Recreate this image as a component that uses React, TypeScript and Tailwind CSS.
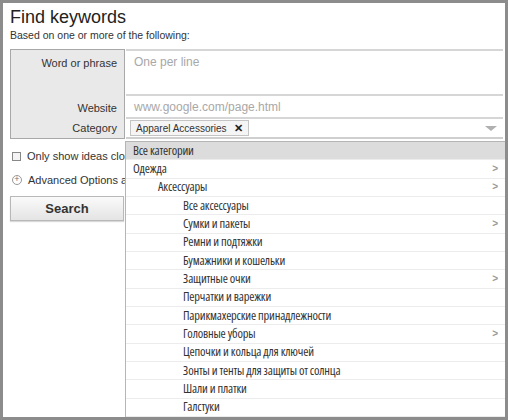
import React from 'react';

interface Category {
  name: string;
  level: number;
  more?: boolean;
}

const categories: Category[] = [
  { name: 'Все категории', level: 0 },
  { name: 'Одежда', level: 0, more: true },
  { name: 'Аксессуары', level: 1, more: true },
  { name: 'Все аксессуары', level: 2 },
  { name: 'Сумки и пакеты', level: 2, more: true },
  { name: 'Ремни и подтяжки', level: 2 },
  { name: 'Бумажники и кошельки', level: 2 },
  { name: 'Защитные очки', level: 2, more: true },
  { name: 'Перчатки и варежки', level: 2 },
  { name: 'Парикмахерские принадлежности', level: 2 },
  { name: 'Головные уборы', level: 2, more: true },
  { name: 'Цепочки и кольца для ключей', level: 2 },
  { name: 'Зонты и тенты для защиты от солнца', level: 2 },
  { name: 'Шали и платки', level: 2 },
  { name: 'Галстуки', level: 2 },
];

const indent = ['pl-[7px]', 'pl-[32px]', 'pl-[57px]'];

function CategoryMenu() {
  return (
    <div className="absolute left-[122px] top-[138px] right-0 bottom-0 flex flex-col border-l border-t border-[#b5b5b5] bg-white">
      {categories.map((c, i) => (
        <div
          key={c.name}
          className={`flex min-h-0 flex-1 items-center justify-between border-b border-[#ececec] pr-[7px] leading-[14px] ${indent[c.level]} ${
            i === 0 ? 'bg-[#dcdcdc]' : ''
          }`}
        >
          <span className="font-['Open_Sans',sans-serif] text-[12.5px] tracking-[-0.2px] text-[#333] [font-stretch:75%]">
            {c.name}
          </span>
          {c.more && <span className="text-[10px] font-bold text-[#999]">&gt;</span>}
        </div>
      ))}
    </div>
  );
}

export default function App() {
  return (
    <div className="relative h-[420px] w-[508px] overflow-hidden border-[3px] border-[#8c8c8c] bg-white font-['Liberation_Sans',Arial,sans-serif] text-[#333]">
      <div className="pl-[7px] pr-[2px] pt-[4px]">
        <h1 className="text-[18px] leading-[20px] text-[#222]">Find keywords</h1>
        <p className="mt-[2px] text-[10.5px] leading-[12px] text-[#333]">Based on one or more of the following:</p>

        <div className="mt-[8px] flex">
          <div className="flex w-[115px] shrink-0 flex-col border border-[#a8a8a8] bg-[#e9e9e9] pr-[7px] text-right text-[11px] text-[#333]">
            <div className="h-[45px] pt-[5px]">Word or phrase</div>
            <div className="flex h-[23px] items-center justify-end pt-[3px]">Website</div>
            <div className="flex h-[20px] items-center justify-end">Category</div>
          </div>
          <div className="ml-[1px] flex flex-1 flex-col border-b-2 border-[#cfcfcf]">
            <div className="h-[45px] border-t-2 border-[#d6d6d6] pl-[8px] pt-[2px] text-[12px] text-[#a8a8a8]">One per line</div>
            <div className="flex h-[23px] items-center border-t-2 border-[#d6d6d6] pl-[8px] text-[12px] text-[#a8a8a8]">
              www.google.com/page.html
            </div>
            <div className="flex h-[20px] items-center justify-between border-t-2 border-[#d6d6d6] pl-[4px] pr-[6px]">
              <div className="flex h-[16px] items-center gap-[7px] border border-[#c4c4c4] bg-[#f5f5f5] px-[5px] text-[10px] text-[#333]">
                Apparel Accessories
                <span className="text-[11px] font-bold leading-none text-[#222]">✕</span>
              </div>
              <div className="h-0 w-0 border-x-[6px] border-t-[5px] border-x-transparent border-t-[#b0b0b0]" />
            </div>
          </div>
        </div>

        <div className="mt-[9px] flex items-center gap-[6px] pl-[2px] text-[11px] whitespace-nowrap">
          <div className="h-[9px] w-[9px] border border-[#888] bg-[#f4f4f4]" />
          Only show ideas closely related to my search terms
        </div>
        <div className="mt-[7px] flex items-center gap-[6px] pl-[2px] text-[11px] whitespace-nowrap">
          <div className="flex h-[10px] w-[10px] items-center justify-center rounded-full border border-[#999] text-[9px] leading-none text-[#777]">
            +
          </div>
          Advanced Options and Filters
        </div>
        <button className="mt-[8px] flex h-[25px] w-[114px] items-center justify-center border border-[#b8b8b8] bg-gradient-to-b from-[#fafafa] to-[#e4e4e4] text-[13px] font-bold text-[#333] shadow-[0_1px_1px_rgba(0,0,0,0.15)]">
          Search
        </button>
      </div>
      <CategoryMenu />
    </div>
  );
}
